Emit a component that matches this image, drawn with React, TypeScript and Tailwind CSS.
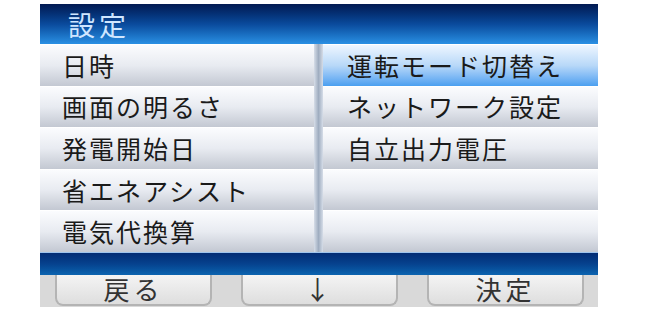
const leftItems = ["日時", "画面の明るさ", "発電開始日", "省エネアシスト", "電気代換算"];
const rightItems = ["運転モード切替え", "ネットワーク設定", "自立出力電圧", "", ""];

function Row({ label, active, pad }: { label: string; active?: boolean; pad: string }) {
  return (
    <div
      className={
        "h-[41.6px] flex items-center border-t border-white " +
        pad +
        " " +
        (active
          ? "bg-gradient-to-b from-[#eef6ff] via-[#b8d8f8] to-[#4a9ff0]"
          : "bg-gradient-to-b from-[#fbfcfe] via-[#e8ebf1] to-[#c3c8d2]")
      }
    >
      <span className="text-[25px] leading-none text-[#1a1a1a] tracking-[2px]">{label}</span>
    </div>
  );
}

function Button({ label }: { label: string }) {
  return (
    <div className="w-[157px] h-[31px] rounded-b-lg border-x-2 border-b-2 border-[#b4b4b4] bg-gradient-to-b from-[#f4f4f4] to-[#dedede] flex items-center justify-center">
      <span className="text-[26px] leading-none text-[#333] tracking-[4px]">{label}</span>
    </div>
  );
}

export default function App() {
  return (
    <div
      className="w-[668px] h-[313px] bg-white overflow-hidden"
      style={{ fontFamily: '"Noto Sans CJK JP", "Noto Sans", sans-serif' }}
    >
      <div className="ml-[40px] mt-[4px] w-[558px]">
        <div className="h-[40px] flex items-center pl-[28px] bg-gradient-to-b from-[#021a52] via-[#0a4a9c] to-[#2a90e4]">
          <span className="text-[27px] leading-none text-[#cfe6ff] tracking-[4px]">設定</span>
        </div>
        <div className="flex">
          <div className="w-[274px] flex flex-col">
            {leftItems.map((t) => (
              <Row key={t} label={t} pad="pl-[22px]" />
            ))}
          </div>
          <div className="w-[9px] bg-gradient-to-r from-[#d6dde8] via-[#9fadc0] to-[#d6dde8]" />
          <div className="flex-1 flex flex-col">
            {rightItems.map((t, i) => (
              <Row key={i} label={t} active={i === 0} pad="pl-[24px]" />
            ))}
          </div>
        </div>
        <div className="h-[23px] border-t border-[#9fc4ec] bg-gradient-to-b from-[#032c74] via-[#06428e] to-[#0c64b0]" />
        <div className="h-[32px] bg-[#d9d9d9] flex gap-[29px] pl-[15px]">
          <Button label="戻る" />
          <Button label="↓" />
          <Button label="決定" />
        </div>
      </div>
    </div>
  );
}
